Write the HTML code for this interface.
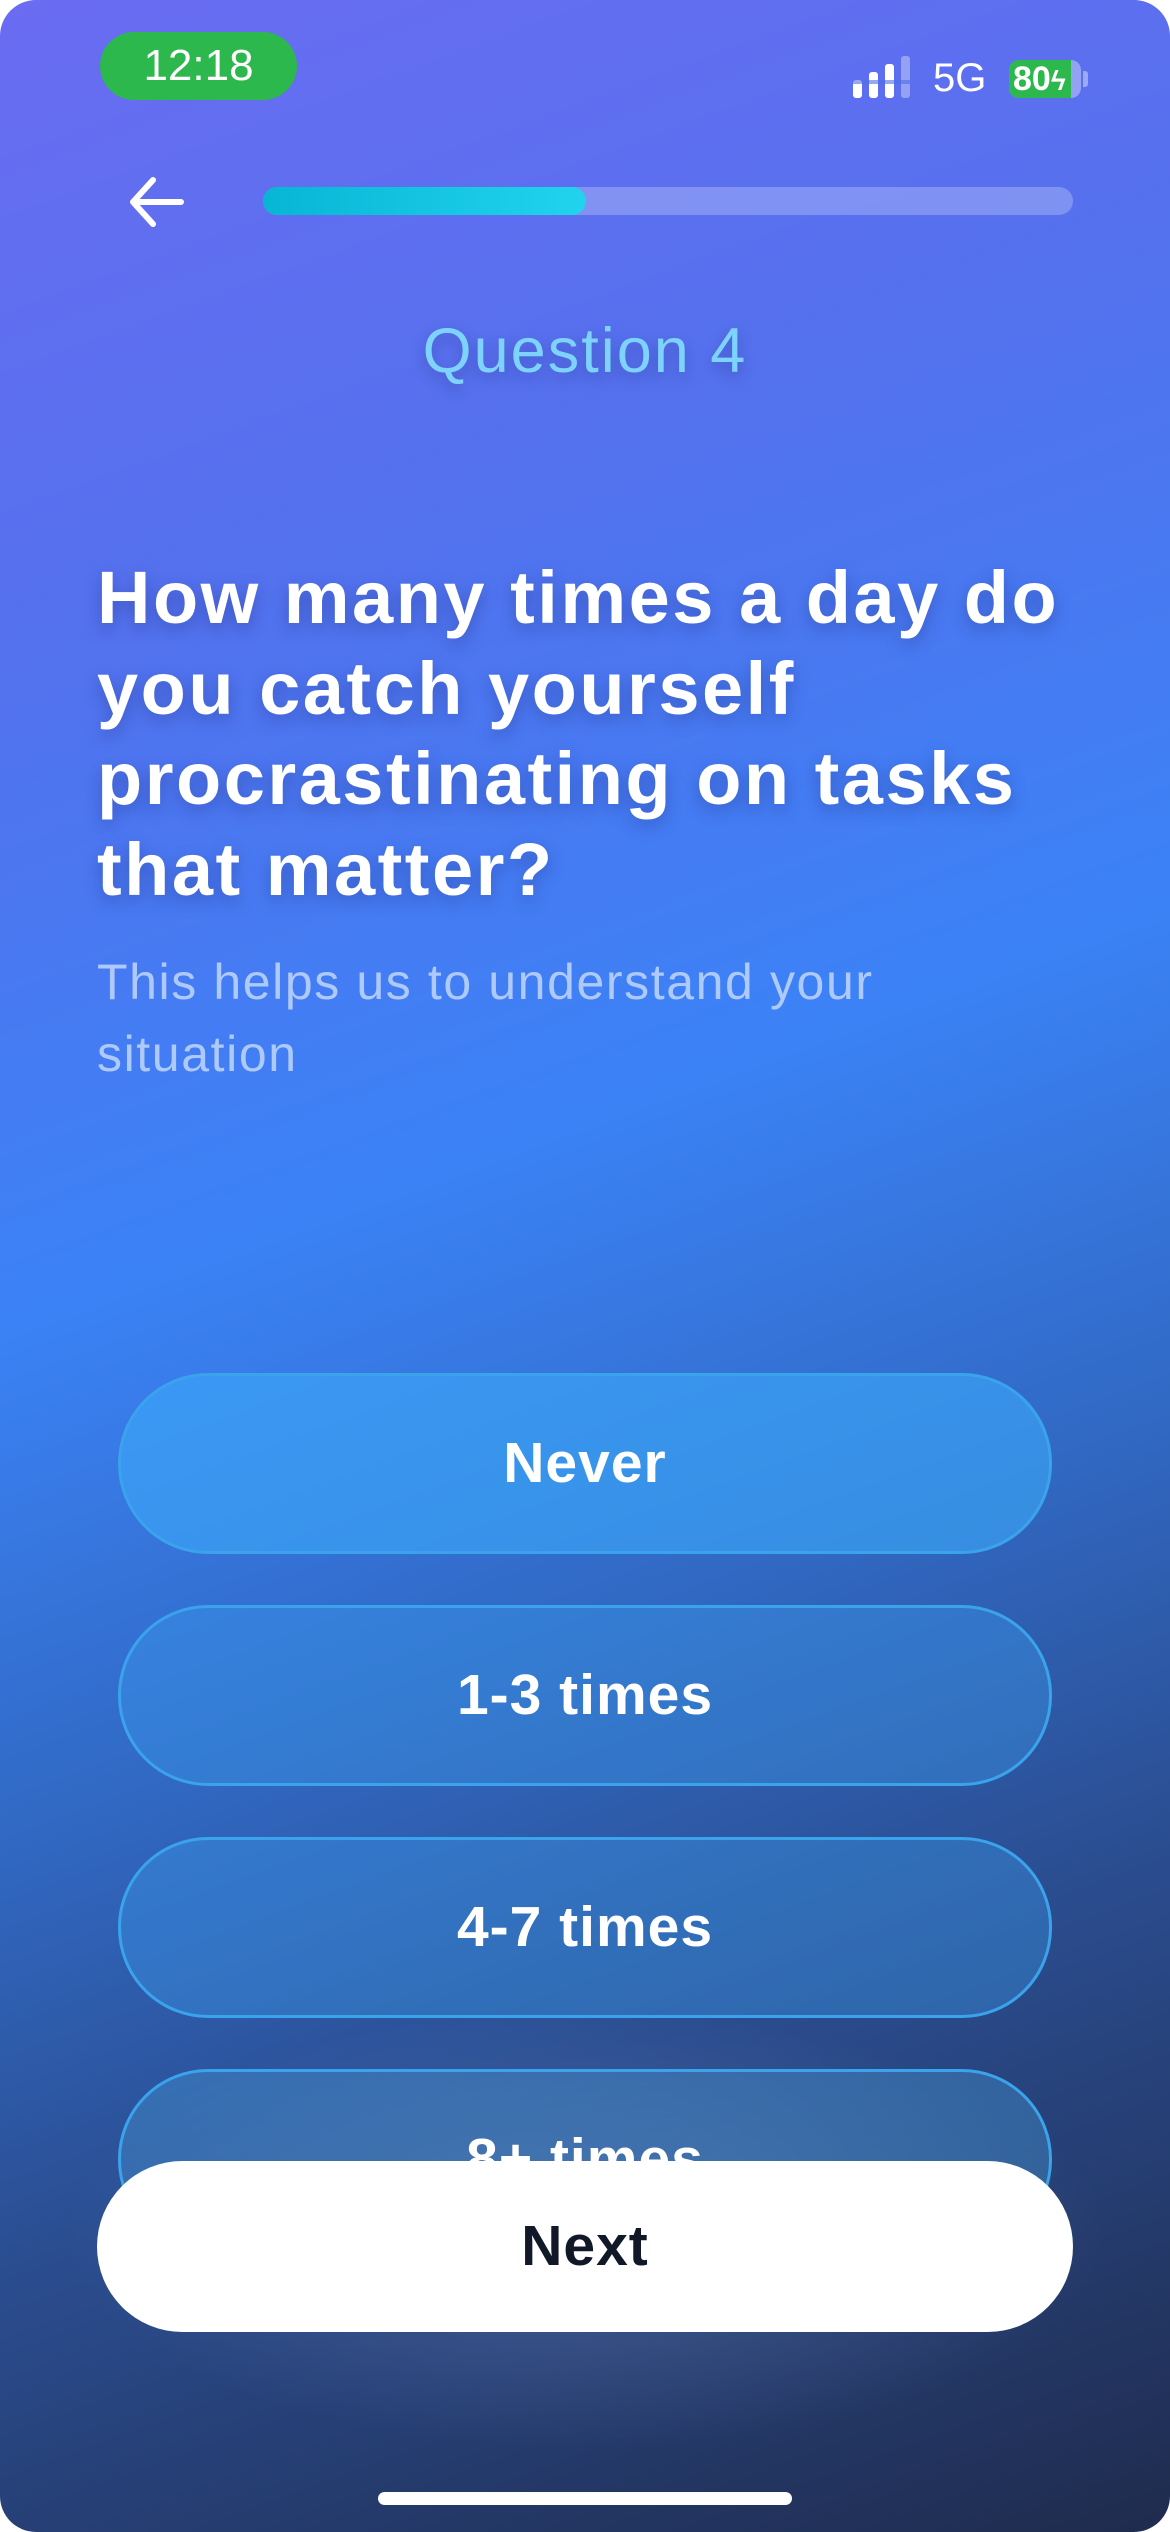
<!DOCTYPE html>
<html><head><meta charset="utf-8">
<style>
html,body{margin:0;padding:0;background:#fff;}
body{width:1170px;height:2532px;overflow:hidden;position:relative;font-family:"Liberation Sans",sans-serif;}
.bg{position:absolute;inset:0;border-radius:36px;overflow:hidden;
background:
radial-gradient(ellipse 520px 220px at 585px 2230px, rgba(130,150,200,0.35), rgba(130,150,200,0) 100%),
linear-gradient(160deg,#6a6cf2 0%,#5471ee 22%,#3b82f6 45%,#3169c4 62%,#2a4b8c 78%,#1f2b4d 100%);}
.pill{position:absolute;left:100px;top:32px;width:197px;height:68px;background:#2db84d;border-radius:34px;color:#fff;font-size:44px;text-align:center;line-height:68px;}
.st{position:absolute;color:#fff;font-size:40px;}
.back{position:absolute;left:125px;top:174px;}
.track{position:absolute;left:263px;top:187px;width:810px;height:28px;border-radius:14px;background:rgba(160,175,245,0.55);}
.fill{position:absolute;left:263px;top:187px;width:323px;height:28px;border-radius:14px;background:linear-gradient(90deg,#06b6d4,#22d3ee);}
.q{position:absolute;left:0;width:1170px;top:315px;text-align:center;color:#7dd3fc;font-size:63px;letter-spacing:2px;text-shadow:0 6px 14px rgba(30,40,120,0.35);}
.title{position:absolute;left:97px;top:553px;color:#fff;font-weight:bold;font-size:74px;line-height:90.5px;white-space:nowrap;letter-spacing:2.5px;text-shadow:0 6px 16px rgba(30,40,120,0.35);}
.sub{position:absolute;left:97px;top:946px;color:#aecafd;font-size:50px;letter-spacing:1.6px;line-height:72px;}
.opt{position:absolute;left:118px;width:928px;height:175px;border:3px solid #3aa3ec;border-radius:90px;color:#fff;font-weight:bold;font-size:57px;letter-spacing:1px;text-align:center;line-height:175px;background:rgba(60,160,240,0.35);}
.next{position:absolute;left:97px;top:2161px;width:976px;height:171px;border-radius:86px;background:#fff;color:#111827;font-weight:bold;font-size:57px;letter-spacing:1px;text-align:center;line-height:171px;}
.home{position:absolute;left:378px;top:2492px;width:414px;height:13px;border-radius:7px;background:#fff;}
</style></head><body>
<div class="bg">
<div class="pill">12:18</div>
<svg class="st" style="left:853px;top:56px" width="62" height="44" viewBox="0 0 62 44">
<rect x="0" y="24" width="9" height="18" rx="3" fill="#fff"/>
<rect x="16" y="16" width="9" height="26" rx="3" fill="#fff"/>
<rect x="32" y="8" width="9" height="34" rx="3" fill="#fff"/>
<rect x="48" y="0" width="9" height="42" rx="3" fill="rgba(255,255,255,0.35)"/>
<rect x="0" y="24" width="57" height="4" fill="rgba(80,110,230,0.6)"/>
</svg>
<div class="st" style="left:933px;top:56px;">5G</div>
<div style="position:absolute;left:1009px;top:60px;width:72px;height:38px;border-radius:10px;background:rgba(255,255,255,0.35);"></div>
<div style="position:absolute;left:1009px;top:60px;width:62px;height:38px;border-radius:10px 0 0 10px;background:#2db84d;color:#fff;font-weight:bold;font-size:34px;line-height:38px;padding-left:4px;box-sizing:border-box;">80<span style="font-size:28px">ϟ</span></div>
<div style="position:absolute;left:1083px;top:71px;width:5px;height:16px;border-radius:0 3px 3px 0;background:rgba(255,255,255,0.4);"></div>
<svg class="back" width="60" height="56" viewBox="0 0 60 56"><path d="M28 6 L8 28 L28 50 M8 28 L56 28" stroke="#fff" stroke-width="6" fill="none" stroke-linecap="round" stroke-linejoin="round"/></svg>
<div class="track"></div><div class="fill"></div>
<div class="q">Question 4</div>
<div class="title">How many times a day do<br>you catch yourself<br>procrastinating on tasks<br>that matter?</div>
<div class="sub">This helps us to understand your<br>situation</div>
<div class="opt" style="top:1373px;background:rgba(60,170,250,0.6);">Never</div>
<div class="opt" style="top:1605px;">1-3 times</div>
<div class="opt" style="top:1837px;">4-7 times</div>
<div class="opt" style="top:2069px;background:rgba(70,150,210,0.4);">8+ times</div>
<div class="next">Next</div>
<div class="home"></div>
</div>
</body></html>
